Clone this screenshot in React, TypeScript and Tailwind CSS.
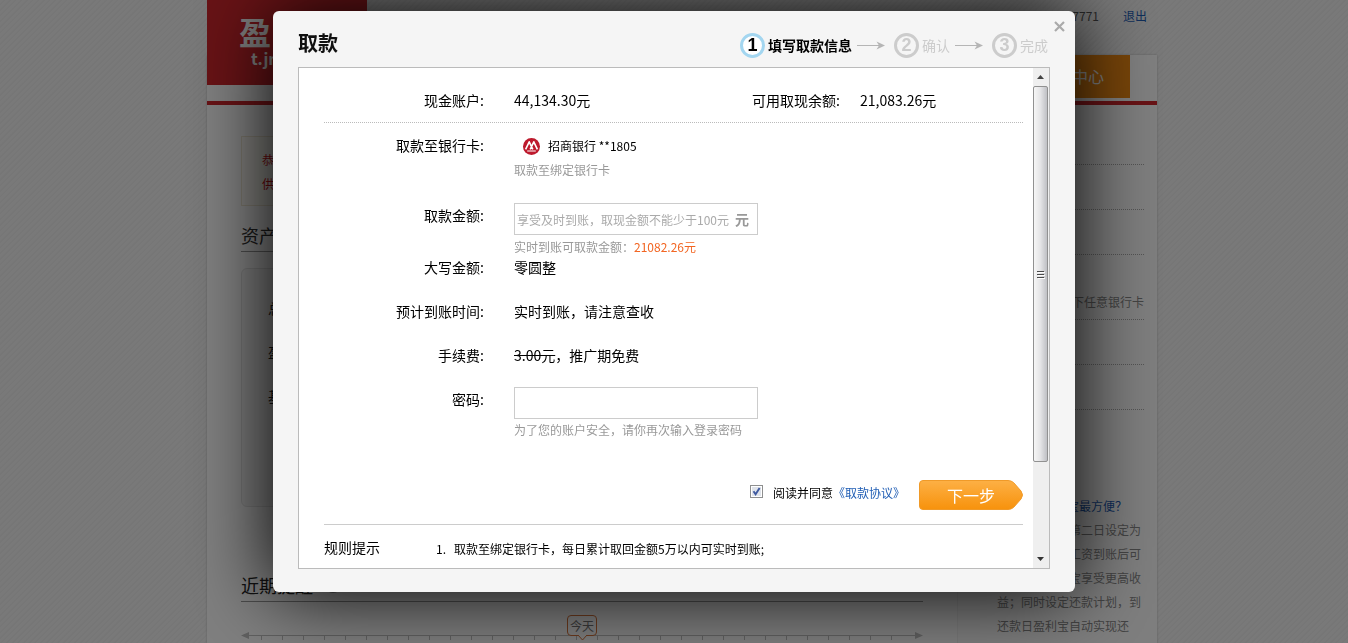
import React, { useState } from "react";

const TICKS = Array.from({ length: 31 }, (_, i) => 20 + i * 21);

function Timeline() {
  return (
    <div className="mt-[13px] flex flex-col items-center">
      <div className="relative z-10 flex h-[21px] items-center rounded-sm border border-[#d8743a] bg-white px-0.5 text-xs text-[#777]">
        今天
        <svg className="absolute top-[19px] left-2.5" width="10" height="6" viewBox="0 0 10 6">
          <path d="M0 0 L4.5 5 L9 0" fill="#fff" stroke="#d8743a" />
        </svg>
      </div>
      <svg className="-mt-1 w-full" height="12" viewBox="0 0 682 12" fill="#c0c0c0">
        <rect x="2" y="3" width="678" height="1" />
        <path d="M0 3.5 L8 0 V7Z M682 3.5 L674 0 V7Z" />
        {TICKS.map((x) => (
          <rect key={x} x={x} y="3" width="1" height="5" />
        ))}
      </svg>
    </div>
  );
}

function AccountPage() {
  return (
    <div className="flex justify-center pl-4" aria-hidden="true">
      <div className="w-[950px] shrink-0">
        <header className="relative flex h-[55px] items-start justify-end gap-6 pr-2.5 text-xs">
          <div className="absolute top-0 left-0 z-10 h-[85px] w-40 bg-[#d0262c] pt-3 pl-8 leading-none font-bold whitespace-nowrap text-white">
            <div className="text-[32px] leading-[38px]">盈</div>
            <div className="pl-3 text-base leading-none">t.jr</div>
          </div>
          <span className="pt-2 text-[#555]">7771</span>
          <a href="#logout" className="pt-2 text-[#1f5db4]">退出</a>
        </header>
        <div className="bg-white shadow-[0_0_2px_#bbb]">
          <nav className="flex h-[46px] justify-end pr-[27px]">
            <a href="#account" className="h-[43px] w-40 bg-[#f08a13] pr-[26px] text-right text-base leading-[43px] text-white">
              中心
            </a>
          </nav>
          <div className="h-1 bg-[#d0262c]" />
          <div className="flex">
            <main className="w-[750px] px-[34px] pt-[31px]">
              <div className="h-[70px] border border-[#f0e8d4] bg-[#fffdf6] px-5 py-[11px] text-xs leading-6 text-[#d0121a]">
                <p>恭</p>
                <p>供</p>
              </div>
              <h2 className="mt-[15px] border-b border-[#999] pb-0.5 text-lg leading-7 text-[#333]">资产</h2>
              <div className="mt-4 h-[239px] rounded-md border border-[#e4e4e4] bg-[#f7f7f7] px-[26px] pt-[17px] text-sm leading-[44px] text-[#222]">
                <p>总</p>
                <p>盈</p>
                <p>基</p>
              </div>
              <h2 className="mt-16 flex items-center gap-3 border-b border-[#999] pb-0.5 text-lg leading-7 text-[#222]">
                近期提醒
                <span className="h-4 w-4 rounded-full bg-[#999]" />
              </h2>
              <Timeline />
            </main>
            <aside className="flex-1 border-l border-[#f2f2f2] bg-[#fdfdfd] pr-[13px] pl-[39px] text-xs text-[#888]">
              <div className="h-[60px] border-b border-dotted border-[#aaa]" />
              <div className="h-[45px] border-b border-dotted border-[#aaa]" />
              <div className="h-[45px] border-b border-dotted border-[#aaa]" />
              <div className="flex h-[65px] items-end justify-end border-b border-dotted border-[#aaa] pb-[9px]">下任意银行卡</div>
              <div className="h-[45px] border-b border-dotted border-[#aaa]" />
              <div className="h-[45px] border-b border-dotted border-[#aaa]" />
              <div className="mt-[84px] w-36 text-right leading-6 whitespace-nowrap">
                <a href="#help" className="block pr-3.5 text-[#1f5db4]">宝最方便？</a>
                <p>第二日设定为</p>
                <p>工资到账后可</p>
                <p>宝享受更高收</p>
                <p className="text-left">益；同时设定还款计划，到</p>
                <p className="text-left">还款日盈利宝自动实现还</p>
              </div>
            </aside>
          </div>
        </div>
      </div>
    </div>
  );
}

function StepNumber({ value, active }: { value: number; active?: boolean }) {
  return (
    <span
      className={
        "flex h-[25px] w-[25px] items-center justify-center rounded-full border-[3px] font-['Liberation_Sans',sans-serif] text-lg leading-none font-bold " +
        (active ? "border-[#a3d6f0] bg-white text-black" : "border-[#ccc] text-[#ccc]")
      }
    >
      {value}
    </span>
  );
}

function StepArrow() {
  return (
    <svg className="mx-[5px]" width="28" height="11" viewBox="0 0 28 11">
      <path d="M0 5.5 H23" stroke="#b5b5b5" strokeWidth="1" />
      <path d="M28 5.5 L19.5 1.5 L22 5.5 L19.5 9.5Z" fill="#b5b5b5" />
    </svg>
  );
}

function Row({ label, htmlFor, className, tall, children }: {
  label: string;
  htmlFor?: string;
  className: string;
  tall?: boolean;
  children: React.ReactNode;
}) {
  const labelClass = "w-40 shrink-0 text-right " + (tall ? "pt-0.5" : "");
  return (
    <div className={"flex gap-[30px] text-sm leading-5 " + className}>
      {htmlFor ? (
        <label htmlFor={htmlFor} className={labelClass}>{label}</label>
      ) : (
        <span className={labelClass}>{label}</span>
      )}
      <div>{children}</div>
    </div>
  );
}

function ScrollBar() {
  return (
    <div className="flex w-4 shrink-0 flex-col items-start bg-[#efefef]">
      <svg className="shrink-0" width="16" height="18" viewBox="0 0 16 18">
        <path d="M7.5 7 L11 11 H4Z" fill="#444" />
      </svg>
      <div className="flex h-[376px] w-[15px] items-center justify-center rounded-xs border border-[#919191] bg-linear-to-r from-[#f6f6f6] via-[#e4e4e6] to-[#bfc0c4]">
        <svg width="8" height="9" viewBox="0 0 8 9">
          <path d="M0 1.5H7M0 4.5H7M0 7.5H7" stroke="#4a4a4a" />
          <path d="M1 2.5H8M1 5.5H8M1 8.5H8" stroke="#fff" />
        </svg>
      </div>
      <svg className="mt-auto shrink-0" width="16" height="18" viewBox="0 0 16 18">
        <path d="M4 7 H11 L7.5 11Z" fill="#333" />
      </svg>
    </div>
  );
}

export default function App() {
  const [agreed, setAgreed] = useState(true);
  return (
    <div className="relative h-screen overflow-hidden bg-[#f0f0f0] bg-[repeating-linear-gradient(135deg,#f3f3f3_0px,#f3f3f3_2px,#ededed_3px,#ededed_4px)] font-['Noto_Sans_CJK_SC',sans-serif] text-black">
      <AccountPage />
      <div className="fixed inset-0 z-20 flex items-start justify-center bg-black/50 pt-[11px]">
        <section role="dialog" aria-labelledby="dialog-title" className="relative w-[802px] max-w-full rounded-md bg-[#f5f5f5] px-[25px] pb-[23px] shadow-[0_0_80px_#000]">
          <header className="flex h-14 items-center justify-between pt-2 pr-0.5">
            <h1 id="dialog-title" className="text-xl font-bold text-[#111]">取款</h1>
            <ol className="flex items-center pt-1 text-sm">
              <li className="flex items-center gap-[3px] font-bold">
                <StepNumber value={1} active />
                填写取款信息
              </li>
              <StepArrow />
              <li className="ml-1 flex items-center gap-[3px] text-[#ccc]">
                <StepNumber value={2} />
                确认
              </li>
              <StepArrow />
              <li className="ml-1 flex items-center gap-[3px] text-[#ccc]">
                <StepNumber value={3} />
                完成
              </li>
            </ol>
            <button type="button" aria-label="关闭" className="absolute top-2.5 right-2.5">
              <svg width="11" height="11" viewBox="0 0 11 11">
                <path d="M1 1 L10 10 M10 1 L1 10" stroke="#aaa" strokeWidth="2.2" />
              </svg>
            </button>
          </header>

          <div className="flex border border-[#bbb] bg-white">
            <form className="min-w-0 flex-1 pt-[22px] pr-2.5 pb-[9px] pl-[25px]">
              <div className="flex border-b border-dotted border-[#bbb] pb-3 text-sm leading-5">
                <span className="w-40 text-right">现金账户:</span>
                <span className="ml-[30px] flex-1">44,134.30元</span>
                <span>可用取现余额:</span>
                <span className="ml-5 w-[163px]">21,083.26元</span>
              </div>

              <Row label="取款至银行卡:" className="mt-3">
                <p className="flex items-center gap-2 pl-[9px] text-xs leading-[22px]">
                  <svg width="17" height="17" viewBox="0 0 17 17">
                    <circle cx="8.5" cy="8.5" r="8.5" fill="#bd1a2d" />
                    <path
                      d="M2.6 11.4 L6.2 3.8 L9.8 11.4 M7.2 11.4 L10.8 3.8 L14.4 11.4"
                      fill="none"
                      stroke="#fff"
                      strokeWidth="1.6"
                      strokeLinejoin="round"
                    />
                    <path d="M4.2 13 H12.8" stroke="#fff" strokeWidth="1" />
                  </svg>
                  招商银行 **1805
                </p>
                <p className="mt-[3px] text-xs leading-5 text-[#999]">取款至绑定银行卡</p>
              </Row>

              <Row label="取款金额:" htmlFor="amount" className="mt-[23px]" tall>
                <div className="flex h-8 w-[244px] items-center border border-[#ccc] pr-2">
                  <input
                    id="amount"
                    type="text"
                    placeholder="享受及时到账，取现金额不能少于100元"
                    className="h-full min-w-0 flex-1 pl-0.5 text-xs outline-none placeholder:text-[#aaa]"
                  />
                  <span className="text-sm font-bold text-[#999]">元</span>
                </div>
                <p className="mt-0.5 text-xs leading-5 text-[#999]">
                  实时到账可取款金额：<span className="text-[#f26522]">21082.26元</span>
                </p>
              </Row>

              <Row label="大写金额:" className="">零圆整</Row>
              <Row label="预计到账时间:" className="mt-6">实时到账，请注意查收</Row>
              <Row label="手续费:" className="mt-6">
                <s>3.00元</s>，推广期免费
              </Row>

              <Row label="密码:" htmlFor="password" className="mt-[22px]" tall>
                <input id="password" type="password" className="block h-8 w-[244px] border border-[#ccc] px-2 outline-none" />
                <p className="mt-px text-xs leading-5 text-[#999]">为了您的账户安全，请你再次输入登录密码</p>
              </Row>

              <div className="mt-10 flex items-center justify-end border-b border-[#ccc] pb-3.5 text-xs">
                <label className="flex items-start gap-2.5 pb-1">
                  <span className="relative flex h-[13px] w-[13px]">
                    <input
                      type="checkbox"
                      checked={agreed}
                      onChange={(e) => setAgreed(e.target.checked)}
                      className="h-[13px] w-[13px] appearance-none border border-[#8e8f8f] bg-[#dfe3ea] inset-ring inset-ring-white"
                    />
                    {agreed && (
                      <svg className="pointer-events-none absolute inset-0" width="13" height="13" viewBox="0 0 13 13">
                        <path d="M3.5 6.2 L5.6 9.3 L9.6 3" fill="none" stroke="#3f5aa0" strokeWidth="1.9" />
                      </svg>
                    )}
                  </span>
                  阅读并同意
                </label>
                <a href="#agreement" className="pb-1 text-[#1f5db4]">《取款协议》</a>
                <button type="button" className="relative ml-3.5 h-[30px] w-[104px] text-base text-white">
                  <svg className="absolute inset-0" width="104" height="30" viewBox="0 0 104 30">
                    <defs>
                      <linearGradient id="next-fill" x1="0" y1="0" x2="0" y2="1">
                        <stop offset="0" stopColor="#fdb045" />
                        <stop offset="1" stopColor="#f7920c" />
                      </linearGradient>
                    </defs>
                    <path
                      d="M4 .5 H89 Q92 .5 94.5 2.5 L102 11 Q105 15 102 19 L94.5 27.5 Q92 29.5 89 29.5 H4 Q.5 29.5 .5 26 V4 Q.5 .5 4 .5Z"
                      fill="url(#next-fill)"
                      stroke="#f09a28"
                    />
                  </svg>
                  <span className="relative">下一步</span>
                </button>
              </div>

              <div className="mt-3 flex text-sm leading-5">
                <h2 className="w-28">规则提示</h2>
                <ol className="flex pt-0.5 text-xs leading-5">
                  <li className="flex gap-2">
                    <span>1.</span>
                    <span>取款至绑定银行卡，每日累计取回金额5万以内可实时到账;</span>
                  </li>
                </ol>
              </div>
            </form>
            <ScrollBar />
          </div>
        </section>
      </div>
    </div>
  );
}
